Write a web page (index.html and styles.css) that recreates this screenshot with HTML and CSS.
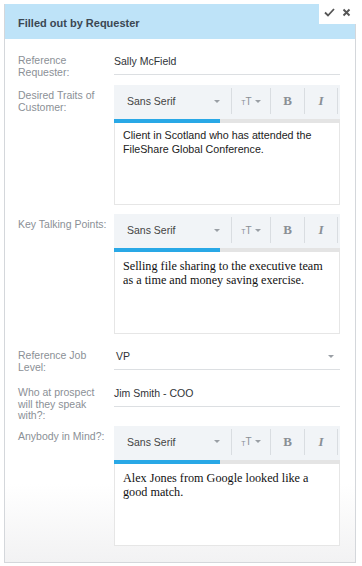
FILE: index.html
```html
<!DOCTYPE html>
<html lang="en">
<head>
    <meta charset="UTF-8">
    <meta name="viewport" content="width=device-width, initial-scale=1.0">
    <title>Reference Request</title>
    <link rel="stylesheet" href="styles.css">
</head>
<body>
    <div class="panel">
        <div class="panel-header">
            <h2>Filled out by Requester</h2>
            <div class="actions">
                <svg width="11" height="9" viewBox="0 0 11 9"><path d="M1 4.5 L4 7.5 L10 1" fill="none" stroke="#555" stroke-width="1.8"/></svg>
                <svg width="9" height="9" viewBox="0 0 9 9"><path d="M1.5 1.5 L7.5 7.5 M7.5 1.5 L1.5 7.5" fill="none" stroke="#555" stroke-width="1.9"/></svg>
            </div>
        </div>
        <div class="panel-body">
            <div class="row">
                <div class="label">Reference Requester:</div>
                <div class="field">Sally McField</div>
            </div>

            <div class="row row-editor">
                <div class="label">Desired Traits of Customer:</div>
                <div class="editor">
                    <div class="toolbar">
                        <div class="tb-item tb-font">Sans Serif <span class="caret"></span></div>
                        <div class="tb-item tb-size"><span class="t-sm">T</span><span class="t-lg">T</span><span class="caret"></span></div>
                        <div class="tb-item tb-bold">B</div>
                        <div class="tb-item tb-italic">I</div>
                        <div class="tb-item tb-more"></div>
                    </div>
                    <div class="progress"><div class="progress-fill" style="width: 47%"></div></div>
                    <div class="editor-body">Client in Scotland who has attended the FileShare Global Conference.</div>
                </div>
            </div>

            <div class="row row-editor">
                <div class="label">Key Talking Points:</div>
                <div class="editor">
                    <div class="toolbar">
                        <div class="tb-item tb-font">Sans Serif <span class="caret"></span></div>
                        <div class="tb-item tb-size"><span class="t-sm">T</span><span class="t-lg">T</span><span class="caret"></span></div>
                        <div class="tb-item tb-bold">B</div>
                        <div class="tb-item tb-italic">I</div>
                        <div class="tb-item tb-more"></div>
                    </div>
                    <div class="progress"><div class="progress-fill" style="width: 47%"></div></div>
                    <div class="editor-body serif">Selling file sharing to the executive team as a time and money saving exercise.</div>
                </div>
            </div>

            <div class="row">
                <div class="label">Reference Job Level:</div>
                <div class="field select">VP <span class="caret"></span></div>
            </div>

            <div class="row tight">
                <div class="label">Who at prospect will they speak with?:</div>
                <div class="field">Jim Smith - COO</div>
            </div>

            <div class="row row-editor last">
                <div class="label">Anybody in Mind?:</div>
                <div class="editor">
                    <div class="toolbar">
                        <div class="tb-item tb-font">Sans Serif <span class="caret"></span></div>
                        <div class="tb-item tb-size"><span class="t-sm">T</span><span class="t-lg">T</span><span class="caret"></span></div>
                        <div class="tb-item tb-bold">B</div>
                        <div class="tb-item tb-italic">I</div>
                        <div class="tb-item tb-more"></div>
                    </div>
                    <div class="progress"><div class="progress-fill" style="width: 47%"></div></div>
                    <div class="editor-body serif">Alex Jones from Google looked like a good match.</div>
                </div>
            </div>
        </div>
    </div>
</body>
</html>
```
FILE: styles.css
```css
body {
    margin: 0;
    font-family: "Liberation Sans", Arial, sans-serif;
    background: #fff;
}
.panel {
    position: relative;
    width: 352px;
    box-sizing: border-box;
    margin: 4px 0 0 4px;
    border: 1px solid #d4d7db;
    border-top: 0;
    background: linear-gradient(#fff 86%, #f2f2f3);
}
.panel-header {
    height: 35px;
    box-sizing: border-box;
    padding: 2px 13px 0;
    background: #bee3f8;
    display: flex;
    align-items: center;
}
.panel-header h2 {
    margin: 0;
    font-size: 11px;
    font-weight: bold;
    color: #3b4752;
}
.actions {
    position: absolute;
    top: -4px;
    right: -1px;
    width: 37px;
    height: 24px;
    background: #fff;
    display: flex;
    align-items: center;
    justify-content: space-around;
    padding: 0 2px;
    box-sizing: border-box;
}
.panel-body {
    padding: 9px 15px 16px 13px;
}
.row {
    display: grid;
    grid-template-columns: 91px 1fr;
    column-gap: 5px;
    margin-bottom: 7px;
}
.row-editor {
    margin-bottom: 9px;
}
.row.tight {
    margin-bottom: 4px;
}
.row.last {
    margin-bottom: 0;
}
.label {
    font-size: 10.5px;
    line-height: 11.5px;
    color: #8b9096;
    padding-top: 7px;
}
.row-editor .label {
    padding-top: 5px;
}
.field {
    height: 26px;
    line-height: 26px;
    border-bottom: 1px solid #dcdfe2;
    font-size: 10.5px;
    color: #2f3337;
}
.select {
    display: flex;
    justify-content: space-between;
    align-items: center;
    padding: 0 6px 0 2px;
}
.caret {
    display: inline-block;
    width: 0;
    height: 0;
    border-left: 3px solid transparent;
    border-right: 3px solid transparent;
    border-top: 3px solid #9a9fa5;
}
.editor {
    min-width: 0;
}
.toolbar {
    display: flex;
    height: 34px;
    background: #f1f4f7;
    overflow: hidden;
}
.tb-item {
    flex-shrink: 0;
    height: 26px;
    margin-top: 3px;
    box-sizing: border-box;
    border-right: 1px solid #d9dde1;
    display: flex;
    align-items: center;
    justify-content: center;
    color: #8a8f95;
}
.tb-font {
    width: 118px;
    justify-content: space-between;
    padding: 0 11px 0 13px;
    font-size: 10.5px;
    color: #444;
}
.tb-size {
    width: 39px;
}
.tb-size .t-sm {
    font-size: 7px;
    margin-top: 3px;
}
.tb-size .t-lg {
    font-size: 10px;
    margin-right: 3px;
}
.tb-bold {
    width: 34px;
    font-family: "Liberation Serif", serif;
    font-weight: bold;
    font-size: 13px;
}
.tb-italic {
    width: 33px;
    font-family: "Liberation Serif", serif;
    font-weight: bold;
    font-style: italic;
    font-size: 13px;
}
.tb-more {
    width: 33px;
}
.progress {
    height: 4px;
    background: #e4e4e4;
}
.progress-fill {
    height: 100%;
    background: #29a8e6;
}
.editor-body {
    height: 82px;
    box-sizing: border-box;
    border: 1px solid #e6e6e6;
    border-top: 0;
    background: #fff;
    padding: 6px 8px;
    font-size: 10.7px;
    line-height: 13.5px;
    color: #222;
}
.editor-body.serif {
    padding-top: 7px;
    font-family: "Liberation Serif", "Times New Roman", serif;
    font-size: 12.2px;
    line-height: 14px;
    color: #111;
}
```
